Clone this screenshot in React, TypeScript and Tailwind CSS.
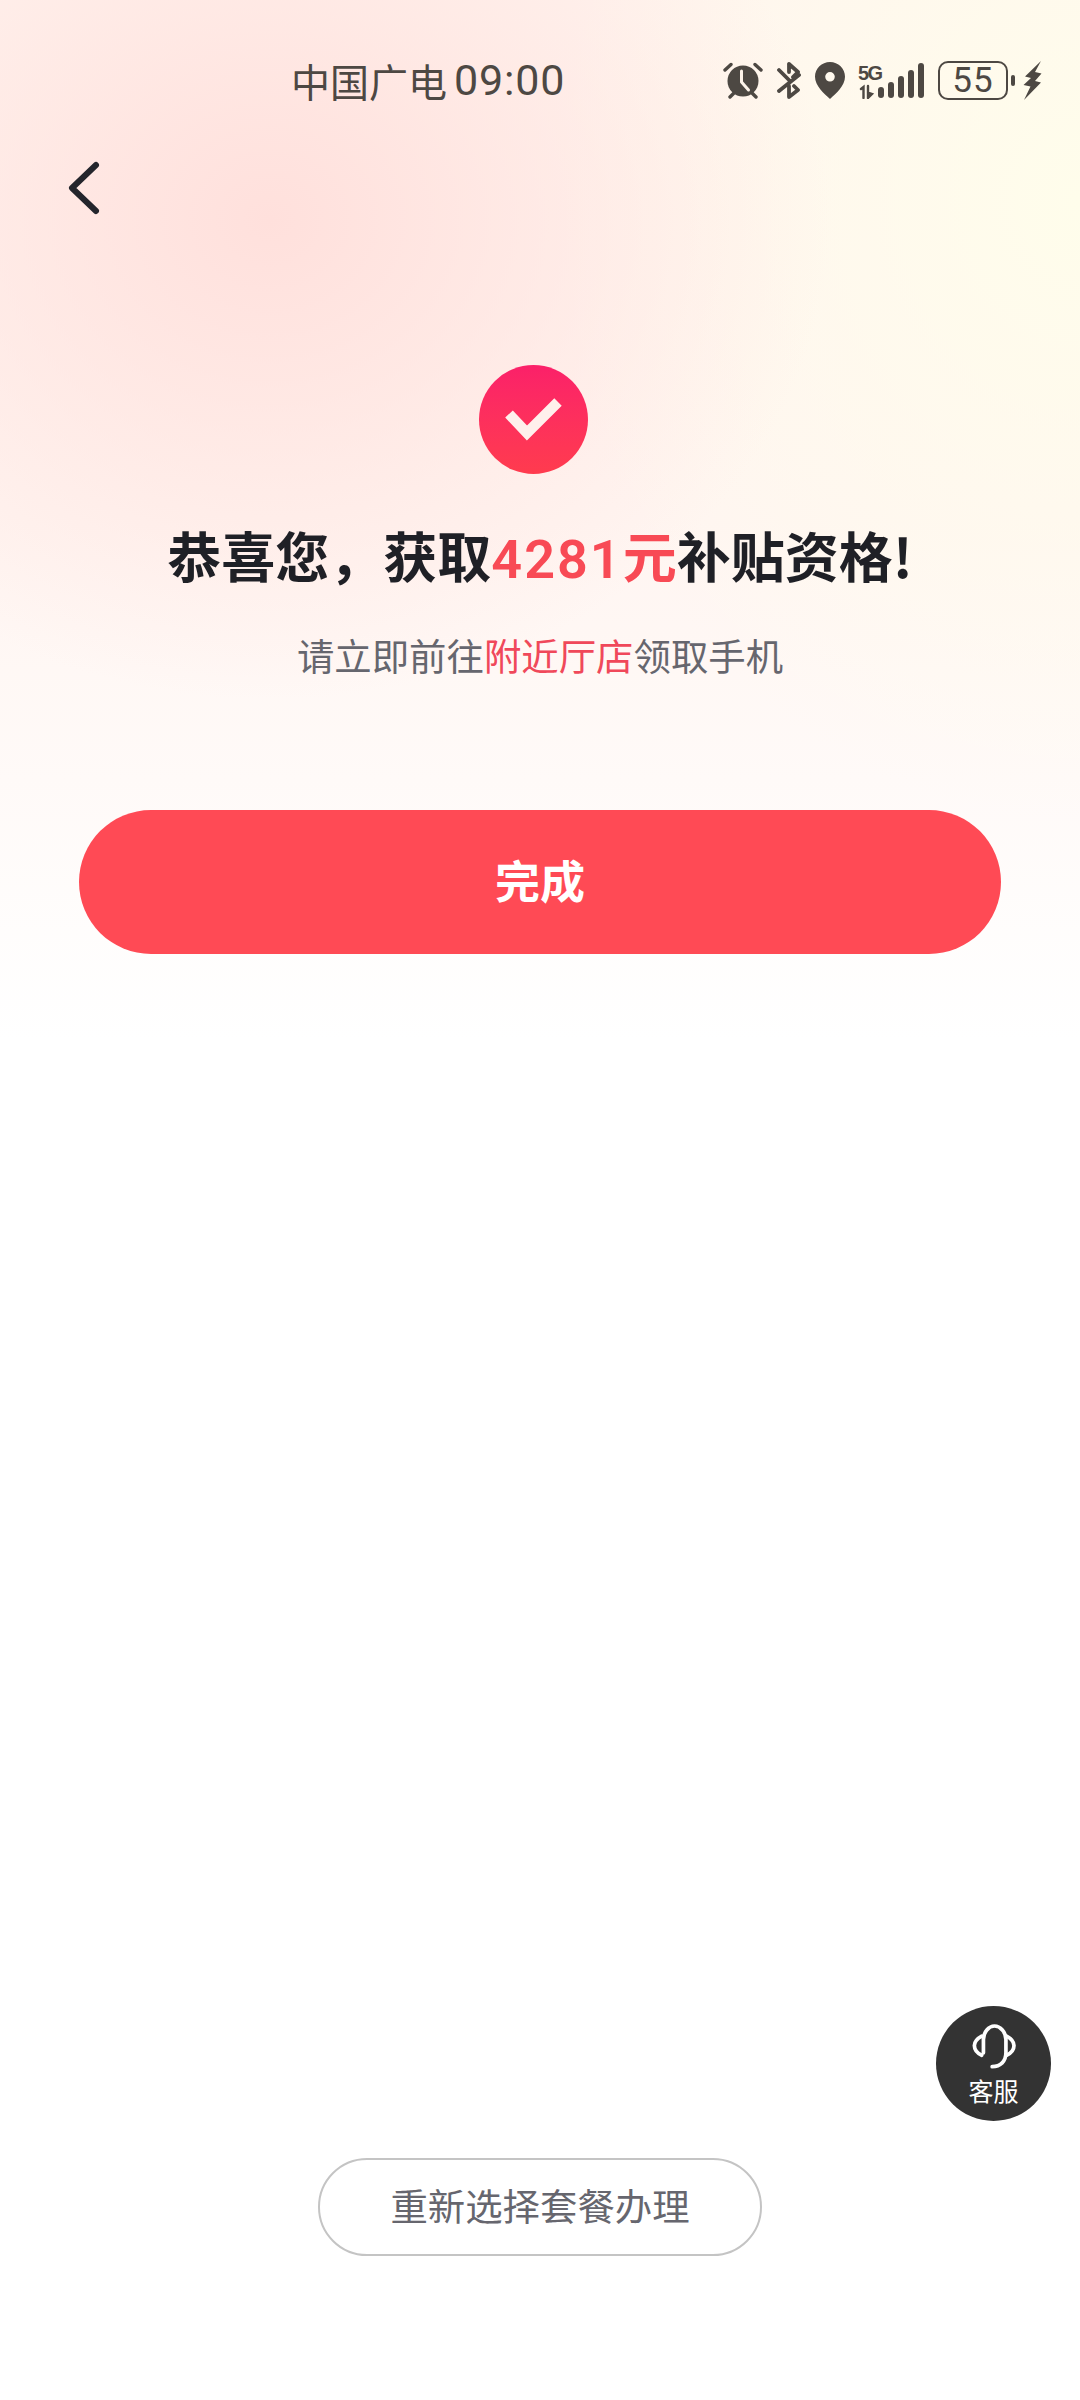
import React from "react";

function Alarm() {
  return (
    <svg width="40" height="37" viewBox="0 0 40 37" fill="none">
      <circle cx="20" cy="19" r="15.500" fill="#4d4843" />
      <path d="M2 8 8 2.500M38 8 32 2.500M7 35l4-4M33 35l-4-4" stroke="#4d4843" strokeWidth="3.400" strokeLinecap="round" />
      <path d="M18.500 9v11l7 8" stroke="#fdf3ea" strokeWidth="3" strokeLinecap="round" strokeLinejoin="round" />
    </svg>
  );
}

function Bluetooth() {
  return (
    <svg width="24" height="37" viewBox="0 0 24 37" fill="none" stroke="#4d4843" strokeWidth="3.800" strokeLinecap="round" strokeLinejoin="round">
      <path d="M2 8l10 10M12 2v8M12 2l9 8-5 5M2 29 22 13M12 24v11l9-7-4-4" />
    </svg>
  );
}

function Pin() {
  return (
    <svg width="30" height="37" viewBox="0 0 30 37">
      <path fillRule="evenodd" fill="#4d4843" d="M15 0C6.700 0 0 6.600 0 14.800 0 24 9 31.500 15 37c6-5.500 15-13 15-22.200C30 6.600 23.300 0 15 0Zm0 10a4.800 4.800 0 1 1 0 9.600 4.800 4.800 0 0 1 0-9.600Z" />
    </svg>
  );
}

function Signal() {
  return (
    <svg width="67" height="37" viewBox="0 0 67 37" fill="#4d4843">
      <text x="0" y="18" fontFamily="'Liberation Sans', sans-serif" fontWeight="700" fontSize="20" fill="#4d4843" textLength="25">5G</text>
      <path d="M3 27l2.500-2v11M10 24v12M10 36l4-4-4-1.500" stroke="#4d4843" strokeWidth="2.400" fill="none" strokeLinecap="round" />
      <rect x="20" y="25" width="6" height="11" rx="3" />
      <rect x="30" y="20" width="6" height="16" rx="3" />
      <rect x="40" y="14" width="6" height="22" rx="3" />
      <rect x="50" y="8" width="6" height="28" rx="3" />
      <rect x="60" y="1" width="6" height="35" rx="3" />
    </svg>
  );
}

function Bolt() {
  return (
    <svg width="19" height="39" viewBox="0 0 19 39">
      <path fill="#4d4843" d="M18 0 2 15.500l6 1.500L.5 24l7 1.500L1 39l17-17.500-6-1.500 6.500-7.500-6.500-1.500Z" />
    </svg>
  );
}

function Battery() {
  return (
    <div className="flex items-center gap-[3px]">
      <div className="w-[70px] h-[39px] rounded-[10px] border-[2.500px] border-[#4d4843] flex items-center justify-center text-[35px] leading-none text-[#4d4843] font-['Roboto',sans-serif] tracking-[1px]">
        55
      </div>
      <div className="w-[4px] h-[11px] rounded-[2px] bg-[#4d4843]" />
    </div>
  );
}

export default function App() {
  return (
    <div className="relative w-[1080px] h-[2400px] overflow-hidden flex flex-col bg-white font-['Noto_Sans_CJK_SC','Noto_Sans',sans-serif] bg-[radial-gradient(ellipse_560px_480px_at_270px_220px,#ffe0dc_0%,#ffe0dc00_100%),radial-gradient(ellipse_540px_620px_at_1080px_200px,#fffdeb_0%,#fffdeb00_100%),linear-gradient(180deg,#fff4ef_0%,#fff5f1_50%,#fffaf8_75%,#ffffff_100%)] bg-[length:100%_100%,100%_100%,100%_1040px] bg-no-repeat">
      <div className="h-[100px] pt-[60px] pl-[291px] pr-[38px] flex items-center justify-between text-[#4d4843]">
        <div className="flex items-center text-[39px] leading-none">
          <span>中国广电</span>
          <span className="ml-[7px] font-['Roboto',sans-serif] text-[43px] tracking-[0.800px]">09:00</span>
        </div>
        <div className="flex items-center">
          <Alarm />
          <div className="w-[14px]" />
          <Bluetooth />
          <div className="w-[14px]" />
          <Pin />
          <div className="w-[13px]" />
          <Signal />
          <div className="w-[13px]" />
          <Battery />
          <div className="w-[8px]" />
          <Bolt />
        </div>
      </div>

      <div className="mt-[50px] h-[76px] pl-[63px] flex items-center">
        <svg width="40" height="58" viewBox="0 0 40 58" fill="none" stroke="#24252c" strokeWidth="6" strokeLinecap="round" strokeLinejoin="round">
          <path d="M33 6 9 29l24 23" />
        </svg>
      </div>

      <div className="mt-[139px] ml-[479px] w-[109px] h-[109px] rounded-full bg-gradient-to-b from-[#fb2069] to-[#ff3b4e]">
        <svg width="109" height="109" viewBox="0 0 109 109" fill="none" stroke="#fff0ec" strokeWidth="10.500" strokeLinejoin="miter">
          <path d="M30 49l18 19 31-31" />
        </svg>
      </div>

      <div className="mt-[44px] text-center text-[54px] leading-[74px] font-bold text-[#1f2026] whitespace-nowrap">
        恭喜您，获取<span className="text-[#f84a55]"><span className="font-['Roboto',sans-serif] font-semibold tracking-[2px]">4281</span>元</span>补贴资格!
      </div>
      <div className="mt-[33px] text-center text-[37.400px] leading-[50px] text-[#66666e] whitespace-nowrap">
        请立即前往<span className="text-[#f0485a]">附近厅店</span>领取手机
      </div>

      <button className="mt-[130px] mx-[79px] h-[144px] pb-[5px] rounded-full bg-[#ff4a55] text-white text-[45px] font-bold flex items-center justify-center">
        完成
      </button>

      <div className="flex-1" />

      <button className="self-center mb-[144px] w-[444px] h-[98px] pb-[4px] rounded-full border-2 border-[#c4c4c4] bg-white text-[37.400px] text-[#66666e] flex items-center justify-center">
        重新选择套餐办理
      </button>

      <div className="absolute left-[936px] top-[2006px] w-[115px] h-[115px] rounded-full bg-[#333333] flex flex-col items-center pt-[18px]">
        <svg width="47" height="47" viewBox="150 104 140 140" fill="none" stroke="#fff" strokeWidth="11" strokeLinecap="round">
          <path d="M190 190V150c0-22 16-40 33-40s34 18 34 40v40c0 25-16 41-41 41" />
          <path d="M185 140c-15 8-22 18-22 28s7 22 22 29M259 140c15 8 22 18 22 28s-7 22-22 29" />
        </svg>
        <span className="mt-[4px] text-[25px] leading-[30px] text-white whitespace-nowrap">客服</span>
      </div>
    </div>
  );
}
